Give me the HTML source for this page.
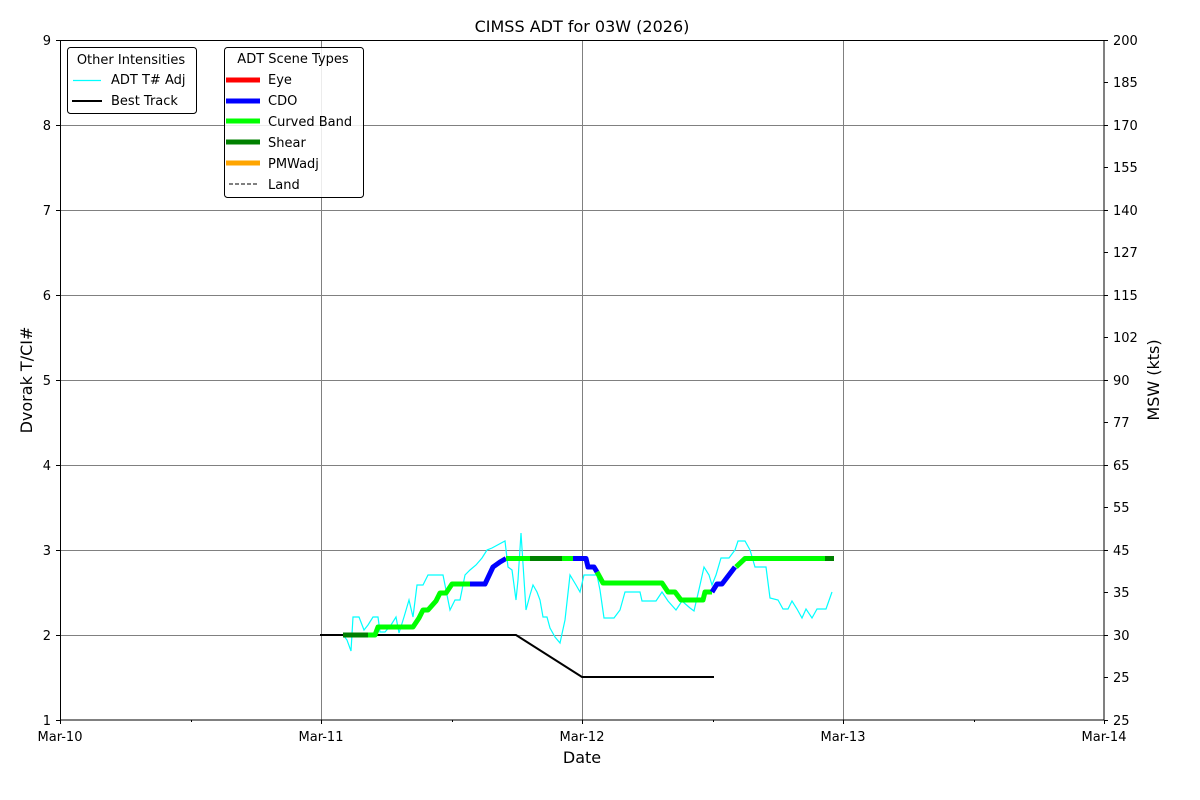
<!DOCTYPE html>
<html><head><meta charset="utf-8"><style>
html,body{margin:0;padding:0;background:#fff;}
svg{display:block;font-family:"DejaVu Sans","Liberation Sans",sans-serif;}
</style></head><body>
<svg width="1200" height="800" viewBox="0 0 1200 800" xmlns="http://www.w3.org/2000/svg">
<rect width="1200" height="800" fill="#fff"/>
<text x="582" y="32" font-size="16" text-anchor="middle">CIMSS ADT for 03W (2026)</text>
<!-- grid -->
<g stroke="#808080" stroke-width="1">
<line x1="60" y1="635.5" x2="1104" y2="635.5"/>
<line x1="60" y1="550.5" x2="1104" y2="550.5"/>
<line x1="60" y1="465.5" x2="1104" y2="465.5"/>
<line x1="60" y1="380.5" x2="1104" y2="380.5"/>
<line x1="60" y1="295.5" x2="1104" y2="295.5"/>
<line x1="60" y1="210.5" x2="1104" y2="210.5"/>
<line x1="60" y1="125.5" x2="1104" y2="125.5"/>
<line x1="321.5" y1="40" x2="321.5" y2="720"/>
<line x1="582.5" y1="40" x2="582.5" y2="720"/>
<line x1="843.5" y1="40" x2="843.5" y2="720"/>
</g>
<!-- cyan -->
<polyline fill="none" stroke="#00ffff" stroke-width="1.2" points="343,635 347,640 351,651 353,617 359,617 364,630 368,625 373,617 378,617 380,632 385,632 391,625 396,617 399,633 404,617 409,600 413,617 417,585 423,585 428,575 443,575 446,590 450,610 455,600 460,600 465,575 470,570 476,565 482,558 487,550 492,548 505,541 508,567 512,570 516,600 518,580 521,533 526,610 530,595 533,585 537,592 540,600 543,617 547,617 550,628 555,637 560,643 565,620 570,575 576,585 580,592 584,575 597,575 600,590 604,618 614,618 620,610 625,592 640,592 642,601 656,601 662,592 668,601 676,610 682,601 690,608 694,611 700,585 704,567 709,575 712,585 716,575 721,558 729,558 735,550 738,541 745,541 750,550 755,567 766,567 770,598 778,600 783,609 788,609 792,601 797,609 802,618 806,609 812,618 817,609 826,609 832,592"/>
<!-- best track -->
<polyline fill="none" stroke="#000" stroke-width="2" points="320,635 516,635 582,677 714,677"/>
<!-- scene types -->
<g fill="none" stroke-width="5" stroke-linejoin="round">
<polyline stroke="#008000" points="343,635 368,635"/>
<polyline stroke="#00ff00" points="368,635 375,635 378,627 413,627 419,618 423,610 428,610 436,601 440,593 446,593 452,584 470,584"/>
<polyline stroke="#0000ff" points="470,584 485,584 493,567 500,562 506,558.5"/>
<polyline stroke="#00ff00" points="506,558.5 530,558.5"/>
<polyline stroke="#008000" points="530,558.5 562,558.5"/>
<polyline stroke="#00ff00" points="562,558.5 573,558.5"/>
<polyline stroke="#0000ff" points="573,558.5 586,558.5 588,567 594,567 597,572"/>
<polyline stroke="#00ff00" points="597,572 603,583 662,583 668,592 675,592 681,600 703,600 705,592 712,592"/>
<polyline stroke="#0000ff" points="712,592 717,584 722,584 735,567"/>
<polyline stroke="#00ff00" points="736,567 745,558.5 825,558.5"/>
<polyline stroke="#008000" points="825,558.5 834,558.5"/>
</g>
<!-- frame -->
<rect x="60.5" y="40.5" width="1043.5" height="679.5" fill="none" stroke="#000" stroke-width="1"/>
<!-- ticks -->
<g stroke="#000" stroke-width="1">
<line x1="56" y1="720.5" x2="60" y2="720.5"/><line x1="56" y1="635.5" x2="60" y2="635.5"/><line x1="56" y1="550.5" x2="60" y2="550.5"/><line x1="56" y1="465.5" x2="60" y2="465.5"/><line x1="56" y1="380.5" x2="60" y2="380.5"/><line x1="56" y1="295.5" x2="60" y2="295.5"/><line x1="56" y1="210.5" x2="60" y2="210.5"/><line x1="56" y1="125.5" x2="60" y2="125.5"/><line x1="56" y1="40.5" x2="60" y2="40.5"/>
<line x1="60.5" y1="720" x2="60.5" y2="724"/><line x1="321.5" y1="720" x2="321.5" y2="724"/><line x1="582.5" y1="720" x2="582.5" y2="724"/><line x1="843.5" y1="720" x2="843.5" y2="724"/><line x1="1104.5" y1="720" x2="1104.5" y2="724"/>
<line x1="191.5" y1="720" x2="191.5" y2="722"/><line x1="452.5" y1="720" x2="452.5" y2="722"/><line x1="713.5" y1="720" x2="713.5" y2="722"/><line x1="974.5" y1="720" x2="974.5" y2="722"/>
</g>
<g stroke="#000" stroke-width="1">
<line x1="1104" y1="720.5" x2="1108" y2="720.5"/><line x1="1104" y1="677.5" x2="1108" y2="677.5"/><line x1="1104" y1="635.5" x2="1108" y2="635.5"/><line x1="1104" y1="592.5" x2="1108" y2="592.5"/><line x1="1104" y1="550.5" x2="1108" y2="550.5"/><line x1="1104" y1="507.5" x2="1108" y2="507.5"/><line x1="1104" y1="465.5" x2="1108" y2="465.5"/><line x1="1104" y1="422.5" x2="1108" y2="422.5"/><line x1="1104" y1="380.5" x2="1108" y2="380.5"/><line x1="1104" y1="337.5" x2="1108" y2="337.5"/><line x1="1104" y1="295.5" x2="1108" y2="295.5"/><line x1="1104" y1="252.5" x2="1108" y2="252.5"/><line x1="1104" y1="210.5" x2="1108" y2="210.5"/><line x1="1104" y1="167.5" x2="1108" y2="167.5"/><line x1="1104" y1="125.5" x2="1108" y2="125.5"/><line x1="1104" y1="82.5" x2="1108" y2="82.5"/><line x1="1104" y1="40.5" x2="1108" y2="40.5"/>
</g>
<g font-size="13" text-anchor="end">
<text x="51" y="725">1</text><text x="51" y="640">2</text><text x="51" y="555">3</text><text x="51" y="470">4</text><text x="51" y="385">5</text><text x="51" y="300">6</text><text x="51" y="215">7</text><text x="51" y="130">8</text><text x="51" y="45">9</text>
</g>
<g font-size="13">
<text x="1113" y="725">25</text><text x="1113" y="682">25</text><text x="1113" y="640">30</text><text x="1113" y="597">35</text><text x="1113" y="555">45</text><text x="1113" y="512">55</text><text x="1113" y="470">65</text><text x="1113" y="427">77</text><text x="1113" y="385">90</text><text x="1113" y="342">102</text><text x="1113" y="300">115</text><text x="1113" y="257">127</text><text x="1113" y="215">140</text><text x="1113" y="172">155</text><text x="1113" y="130">170</text><text x="1113" y="87">185</text><text x="1113" y="45">200</text>
</g>
<g font-size="13" text-anchor="middle">
<text x="60" y="741">Mar-10</text><text x="321" y="741">Mar-11</text><text x="582" y="741">Mar-12</text><text x="843" y="741">Mar-13</text><text x="1104" y="741">Mar-14</text>
</g>
<text x="582" y="763" font-size="16" text-anchor="middle">Date</text>
<text transform="translate(32,380) rotate(-90)" font-size="16" text-anchor="middle">Dvorak T/CI#</text>
<text transform="translate(1159,380) rotate(-90)" font-size="16" text-anchor="middle">MSW (kts)</text>
<!-- legend 1 -->
<rect x="67.5" y="47.5" width="129" height="66" rx="3" fill="#fff" fill-opacity="0.85" stroke="#000" stroke-width="1"/>
<text x="131" y="64" font-size="13" text-anchor="middle">Other Intensities</text>
<line x1="73" y1="80.5" x2="101" y2="80.5" stroke="#00ffff" stroke-width="1.2"/>
<text x="111" y="84" font-size="13">ADT T# Adj</text>
<line x1="72" y1="101" x2="102" y2="101" stroke="#000" stroke-width="2"/>
<text x="111" y="105" font-size="13">Best Track</text>
<!-- legend 2 -->
<rect x="224.5" y="47.5" width="139" height="150" rx="3" fill="#fff" fill-opacity="0.85" stroke="#000" stroke-width="1"/>
<text x="293" y="63" font-size="13" text-anchor="middle">ADT Scene Types</text>
<g stroke-width="5">
<line x1="226" y1="80" x2="260" y2="80" stroke="#ff0000"/>
<line x1="226" y1="101" x2="260" y2="101" stroke="#0000ff"/>
<line x1="226" y1="121" x2="260" y2="121" stroke="#00ff00"/>
<line x1="226" y1="142" x2="260" y2="142" stroke="#008000"/>
<line x1="226" y1="163" x2="260" y2="163" stroke="#ffa500"/>
</g>
<line x1="229" y1="184" x2="258" y2="184" stroke="#000" stroke-width="1" stroke-dasharray="4,2"/>
<g font-size="13">
<text x="268" y="84">Eye</text><text x="268" y="105">CDO</text><text x="268" y="126">Curved Band</text><text x="268" y="147">Shear</text><text x="268" y="168">PMWadj</text><text x="268" y="189">Land</text>
</g>
</svg>
</body></html>
